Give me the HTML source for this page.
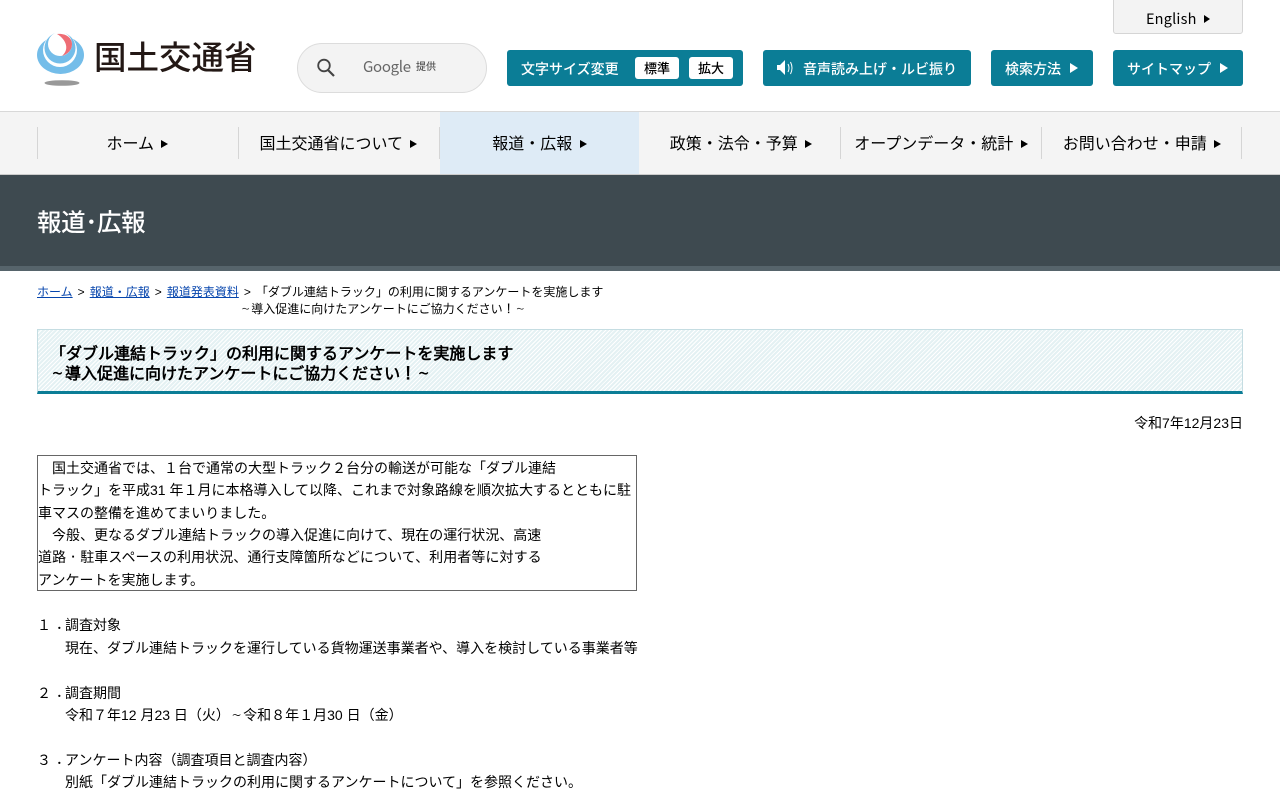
<!DOCTYPE html>
<html><head><meta charset="utf-8"><title>国土交通省</title>
<style>
html,body{margin:0;padding:0;background:#fff;width:1280px;height:800px;overflow:hidden}
body{position:relative;font-family:"Liberation Sans",sans-serif;color:#000;font-size:14px}
.a{position:absolute;white-space:nowrap}
.n{font-family:"Liberation Sans","Noto Sans CJK JP",sans-serif}
.w{font-family:"NanumGothic",sans-serif}
.i{font-family:"IPAGothic",sans-serif}
.p{position:relative;left:5px;top:-1px}
.btn{position:absolute;background:#0b7d96;border-radius:3px;height:36px;top:50px;color:#fff;font:500 14px/36px "Liberation Sans","Noto Sans CJK JP",sans-serif;white-space:nowrap}
.tri{display:inline-block;width:0;height:0;border-left:7px solid currentColor;border-top:4.5px solid transparent;border-bottom:4.5px solid transparent}
.nav{position:absolute;top:127px;height:32px;border-left:1px solid #d5d5d5;box-sizing:content-box;text-align:center;font:400 16px/35px "Liberation Sans","Noto Sans CJK JP",sans-serif;white-space:nowrap;color:#000}
.l{position:absolute;white-space:nowrap;font-size:14px;line-height:22px}
a{color:#0645ad}
</style></head><body>
<svg class="a" style="left:36px;top:33px" width="50" height="54" viewBox="0 0 50 54">
<ellipse cx="24.500" cy="22" rx="23.500" ry="19" fill="#74bde9"/>
<circle cx="24" cy="17" r="17" fill="#fff"/>
<circle cx="24" cy="15" r="15.500" fill="#74bde9"/>
<circle cx="24" cy="11" r="12" fill="#fff"/>
<path d="M21 1c9-1 15 4 15 10 0 6-4 10-10 12 3-3 5-6 4-11-1-4-4-8-9-11z" fill="#ee6d75"/>
<ellipse cx="26" cy="50" rx="17.500" ry="2.800" fill="#999"/></svg>
<div class="a n" style="left:94px;top:37px;font-size:32.500px;line-height:42px;font-weight:500;color:#231815">国土交通省</div>
<div class="a" style="left:297px;top:43px;width:188px;height:48px;border:1px solid #dcdcdc;border-radius:25px;background:#f3f3f3"></div>
<svg class="a" style="left:315px;top:57px" width="22" height="22" viewBox="0 0 22 22"><circle cx="9" cy="8.500" r="5.800" fill="none" stroke="#444" stroke-width="1.800"/><path d="M13 13l6 6" stroke="#444" stroke-width="2.200"/></svg>
<div class="a" style="left:363px;top:57px;font-family:'Noto Sans CJK JP',sans-serif;font-size:15px;line-height:20px;color:#666;letter-spacing:-.3px">Google</div>
<div class="a n" style="left:416px;top:61px;font-size:10px;line-height:14px;color:#555;font-weight:500">提供</div>
<div class="a" style="left:1113px;top:-3px;width:128px;height:35px;border:1px solid #d5d5d5;border-radius:3px;background:#f3f3f3;text-align:center;font-family:'Noto Sans CJK JP',sans-serif;font-size:14.500px;line-height:42px;font-weight:400;letter-spacing:.2px">English <span class="tri" style="margin-left:4px;border-left-width:6px;border-top-width:4px;border-bottom-width:4px;vertical-align:1px"></span></div>
<div class="btn" style="left:507px;width:236px"><span class="a" style="left:14px;top:1px">文字サイズ変更</span>
<span class="a" style="left:128px;top:7px;width:44px;height:22px;background:#fff;border-radius:3px;color:#000;text-align:center;font-size:13px;line-height:23px">標準</span>
<span class="a" style="left:182px;top:7px;width:44px;height:22px;background:#fff;border-radius:3px;color:#000;text-align:center;font-size:13px;line-height:23px">拡大</span></div>
<div class="btn" style="left:763px;width:208px"><svg class="a" style="left:13px;top:9px" width="20" height="18" viewBox="0 0 20 18"><path d="M1 6h3l5-5v15l-5-5H1z" fill="#fff"/><path d="M12 5q2 4 0 8M14.500 3q3 6 0 12" stroke="#fff" fill="none" stroke-width="1"/></svg><span class="a" style="left:40px;top:1px">音声読み上げ・ルビ振り</span></div>
<div class="btn" style="left:991px;width:102px"><span class="a" style="left:14px;top:1px">検索方法</span><span class="tri a" style="left:79px;top:13px;border-left-width:8px;border-top-width:5px;border-bottom-width:5px"></span></div>
<div class="btn" style="left:1113px;width:130px"><span class="a" style="left:14px;top:1px">サイトマップ</span><span class="tri a" style="left:107px;top:13px;border-left-width:8px;border-top-width:5px;border-bottom-width:5px"></span></div>

<div class="a" style="left:0;top:111px;width:1280px;height:64px;background:#f4f4f4;border-top:1px solid #d8d8d8;border-bottom:1px solid #ccc;box-sizing:border-box"></div>
<div class="a" style="left:440px;top:112px;width:199px;height:62px;background:#deebf6"></div>
<div class="nav" style="left:37px;width:199px">ホーム <span class="tri" style="margin-left:3px;border-left-width:7px;vertical-align:1px"></span></div>
<div class="nav" style="left:238px;width:199px">国土交通省について <span class="tri" style="margin-left:3px;vertical-align:1px"></span></div>
<div class="nav" style="left:439px;width:199px">報道・広報 <span class="tri" style="margin-left:3px;vertical-align:1px"></span></div>
<div class="nav" style="left:641px;width:200px;border-left:0">政策・法令・予算 <span class="tri" style="margin-left:3px;vertical-align:1px"></span></div>
<div class="nav" style="left:840px;width:200px">オープンデータ・統計 <span class="tri" style="margin-left:3px;vertical-align:1px"></span></div>
<div class="nav" style="left:1041px;width:200px">お問い合わせ・申請 <span class="tri" style="margin-left:3px;vertical-align:1px"></span></div>
<div class="a" style="left:1241px;top:127px;width:1px;height:32px;background:#d5d5d5"></div>

<div class="a" style="left:0;top:175px;width:1280px;height:96px;background:#3e4a50;border-bottom:5px solid #56646b;box-sizing:border-box"></div>
<div class="a n" style="left:37px;top:206px;font-size:24.500px;line-height:36px;color:#fff;font-weight:500;letter-spacing:-.4px">報道･広報</div>

<div class="a" style="left:37px;top:284px;font-size:12px;line-height:17px;word-spacing:1.700px"><a href="#">ホーム</a> &gt; <a href="#">報道・広報</a> &gt; <a href="#">報道発表資料</a> &gt; 「ダブル連結トラック」の利用に関するアンケートを実施します</div>
<div class="a" style="left:240px;top:301px;font-size:12px;line-height:17px"><span class="w">～</span>導入促進に向けたアンケートにご協力ください<span class="i">！</span><span class="w">～</span></div>

<div class="a" style="left:37px;top:329px;width:1206px;height:65px;box-sizing:border-box;border:1px solid #c5dde2;border-bottom:3px solid #0b7d96;background:repeating-linear-gradient(135deg,#e4f1f3 0,#e4f1f3 2px,#fff 2px,#fff 3px)"></div>
<div class="a" style="left:50px;top:345px;font-size:16px;line-height:19px;font-weight:bold">「ダブル連結トラック」の利用に関するアンケートを実施します<br><span class="w">～</span>導入促進に向けたアンケートにご協力ください<span class="i">！</span><span class="w">～</span></div>
<div class="a" style="right:37px;top:414px;font-size:14px;line-height:18px">令和7年12月23日</div>

<div class="a" style="left:37px;top:455px;width:600px;height:136px;border:1px solid #666;box-sizing:border-box"></div>
<div class="l" style="left:38px;top:457px">　国土交通省では、１台で通常の大型トラック２台分の輸送が可能な「ダブル連結</div>
<div class="l" style="left:38px;top:479px">トラック」を平成31 年１月に本格導入して以降、これまで対象路線を順次拡大するとともに駐</div>
<div class="l" style="left:38px;top:502px">車マスの整備を進めてまいりました。</div>
<div class="l" style="left:38px;top:524px">　今般、更なるダブル連結トラックの導入促進に向けて、現在の運行状況、高速</div>
<div class="l" style="left:38px;top:546px;letter-spacing:.07px">道路<span class="i">・</span>駐車スペースの利用状況、通行支障箇所などについて、利用者等に対する</div>
<div class="l" style="left:38px;top:569px">アンケートを実施します。</div>
<div class="l" style="left:37px;top:614px">１<span class="p">．</span>調査対象</div>
<div class="l" style="left:65px;top:637px">現在、ダブル連結トラックを運行している貨物運送事業者や、導入を検討している事業者等</div>
<div class="l" style="left:37px;top:682px">２<span class="p">．</span>調査期間</div>
<div class="l" style="left:65px;top:704px">令和７年12 月23 日（火）<span class="w">～</span>令和８年１月30 日（金）</div>
<div class="l" style="left:37px;top:749px">３<span class="p">．</span>アンケート内容（調査項目と調査内容）</div>
<div class="l" style="left:65px;top:771px">別紙「ダブル連結トラックの利用に関するアンケートについて」を参照ください。</div>
</body></html>
